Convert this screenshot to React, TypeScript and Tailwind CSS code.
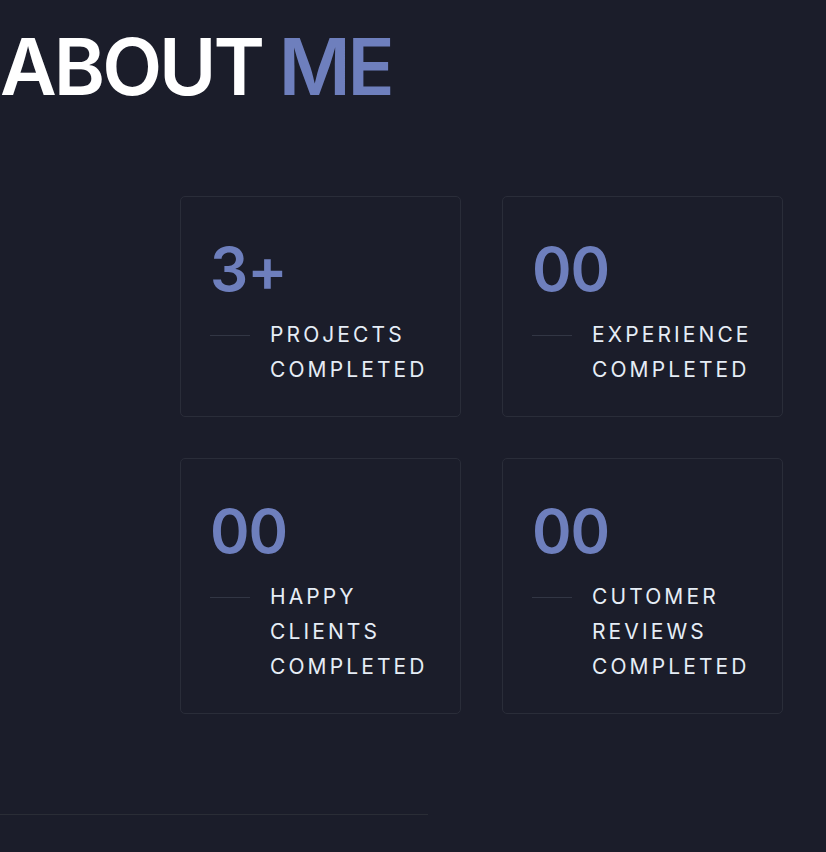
import React from "react";

const cards = [
  { n: "3+", label: ["PROJECTS", "COMPLETED"] },
  { n: "00", label: ["EXPERIENCE", "COMPLETED"] },
  { n: "00", label: ["HAPPY", "CLIENTS", "COMPLETED"] },
  { n: "00", label: ["CUTOMER", "REVIEWS", "COMPLETED"] },
];

export default function App() {
  return (
    <div
      className="w-[826px] h-[852px] overflow-hidden bg-[#1b1d2a]"
      style={{ fontFamily: "Inter, 'Noto Sans', sans-serif" }}
    >
      <h1 className="pt-[24px] text-[78px] leading-[86px] font-semibold tracking-[-3px] text-white whitespace-nowrap">
        ABOUT <span className="text-[#6e7fbd]">ME</span>
      </h1>
      <div className="flex pt-[86px]">
        <div className="w-[180px] shrink-0" />
        <div className="grid grid-cols-[281px_281px] gap-x-[41px] gap-y-[41px] items-start">
          {cards.map((c, i) => (
            <div
              key={i}
              className={`rounded-[5px] border border-[#2a2d39] pl-[29px] pt-[36px] ${i < 2 ? "h-[221px]" : "h-[256px]"}`}
            >
              <div className="text-[60px] leading-[72px] font-semibold text-[#6e7fbd] tracking-[-1px]">
                {c.n}
              </div>
              <div className="flex mt-[12px]">
                <div className="w-[40px] h-[1px] bg-[#323644] mt-[18px] shrink-0" />
                <div className="ml-[20px] text-[21px] leading-[35px] tracking-[3.1px] text-[#e6edf6]">
                  {c.label.map((l) => (
                    <div key={l}>{l}</div>
                  ))}
                </div>
              </div>
            </div>
          ))}
        </div>
      </div>
      <div className="mt-[100px] w-[428px] h-[1px] bg-[#2a2d36]" />
    </div>
  );
}
